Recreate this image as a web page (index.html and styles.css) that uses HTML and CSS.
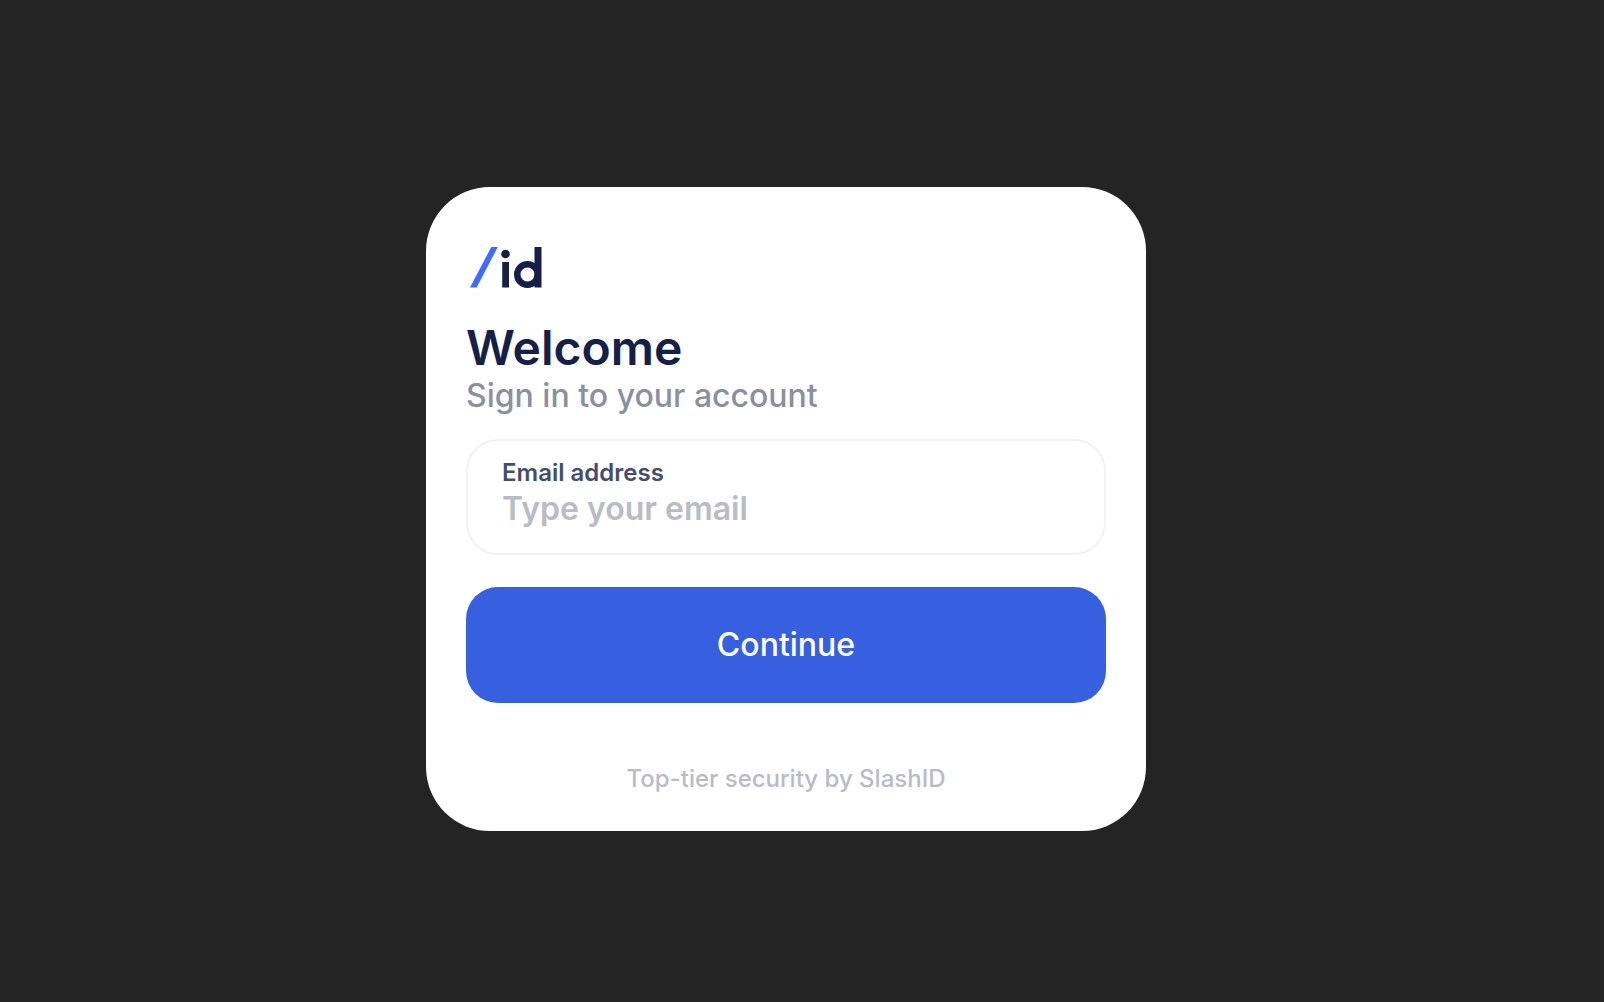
FILE: index.html
```html
<!DOCTYPE html>
<html lang="en">
<head>
<meta charset="utf-8">
<meta name="viewport" content="width=device-width, initial-scale=1">
<title>Sign in</title>
<link rel="stylesheet" href="styles.css">
</head>
<body class="page">
<main class="card">
  <svg class="logo" width="80" height="42" viewBox="0 0 80 42" role="img" aria-label="SlashID">
    <path class="logo-slash" d="M25.300 0h6.500L10.700 40.500H4z"/>
    <circle class="logo-mark" cx="39.500" cy="7" r="4.300"/>
    <rect class="logo-mark" x="36.200" y="15" width="6.800" height="25.500"/>
    <circle class="logo-ring" cx="61.500" cy="27.500" r="10.250"/>
    <rect class="logo-mark" x="68.500" y="0" width="7" height="40.500"/>
  </svg>
  <h1 class="title">Welcome</h1>
  <p class="subtitle">Sign in to your account</p>
  <form class="form">
    <div class="field">
      <label class="field-label" for="email">Email address</label>
      <input class="field-input" id="email" name="email" type="email" placeholder="Type your email">
    </div>
    <button class="submit" type="submit">Continue</button>
  </form>
  <p class="footer">Top-tier security by SlashID</p>
</main>
</body>
</html>
```
FILE: styles.css
```css
* {
  box-sizing: border-box;
}

.page {
  margin: 0;
  min-height: 100vh;
  padding: 16px 32px 0 0;
  display: flex;
  align-items: center;
  justify-content: center;
  background: #242424;
  font-family: Inter, "Liberation Sans", sans-serif;
}

.card {
  width: 100%;
  max-width: 720px;
  padding: 60px 40px 36px;
  display: flex;
  flex-direction: column;
  background: #fff;
  border-radius: 64px;
}

.logo {
  margin-bottom: 31px;
}

.logo-slash {
  fill: #3d6cff;
}

.logo-mark {
  fill: #161f49;
}

.logo-ring {
  fill: none;
  stroke: #161f49;
  stroke-width: 6.5;
}

.title {
  margin: 0;
  font-size: 48px;
  line-height: 56px;
  font-weight: 600;
  color: #161f49;
}

.subtitle {
  margin: 0 0 23px;
  font-size: 32px;
  line-height: 40px;
  font-weight: 500;
  color: #8a8fa4;
}

.form {
  display: flex;
  flex-direction: column;
  gap: 32px;
}

.field {
  min-height: 116px;
  padding: 16px 34px;
  display: flex;
  flex-direction: column;
  border: 2px solid #f2f2f2;
  border-radius: 32px;
}

.field-label {
  font-size: 24px;
  line-height: 32px;
  font-weight: 600;
  color: #454c6d;
}

.field-input {
  width: 100%;
  height: 40px;
  padding: 0;
  border: 0;
  outline: 0;
  background: none;
  font: 600 32px/40px Inter, "Liberation Sans", sans-serif;
  color: #161f49;
}

.field-input::placeholder {
  color: #b9bbc8;
  opacity: 1;
}

.submit {
  min-height: 116px;
  padding: 0 32px;
  border: 0;
  border-radius: 32px;
  background: #3760e0;
  color: #fff;
  font: 500 32px/40px Inter, "Liberation Sans", sans-serif;
}

.footer {
  margin: 60px 0 0;
  font-size: 24px;
  line-height: 32px;
  font-weight: 500;
  text-align: center;
  color: #b9bbc8;
}
```
